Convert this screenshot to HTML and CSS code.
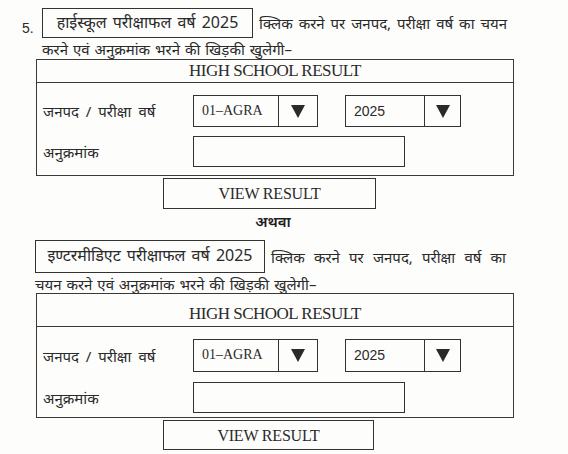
FILE: index.html
```html
<!DOCTYPE html>
<html lang="hi">

<head>
    <meta charset="utf-8">
    <meta name="viewport" content="width=device-width, initial-scale=1.0">
    <link rel="stylesheet" href="styles.css">
</head>

<body>
    <div class="sheet">

        <!-- step 5: high school result -->
        <div class="step step-hs">
            <div class="intro-line">
                <span class="step-no">5.</span>
                <span class="link-box">हाईस्कूल परीक्षाफल वर्ष 2025</span>
                <span class="intro-rest">क्लिक करने पर जनपद, परीक्षा वर्ष का चयन</span>
            </div>
            <div class="intro-next">करने एवं अनुक्रमांक भरने की खिड़की खुलेगी–</div>

            <div class="result-form">
                <div class="form-title">HIGH SCHOOL RESULT</div>
                <div class="form-row row-select">
                    <label class="wide-label">जनपद / परीक्षा वर्ष</label>
                    <div class="fake-select sel-district">
                        <span class="sel-value">01–AGRA</span>
                        <span class="sel-arrow"><svg width="14" height="13" viewBox="0 0 14 13"><path d="M0 0H14L7 13Z" fill="#2a2a2a"/></svg></span>
                    </div>
                    <div class="fake-select sel-year">
                        <span class="sel-value year">2025</span>
                        <span class="sel-arrow"><svg width="14" height="13" viewBox="0 0 14 13"><path d="M0 0H14L7 13Z" fill="#2a2a2a"/></svg></span>
                    </div>
                </div>
                <div class="form-row row-roll">
                    <label>अनुक्रमांक</label>
                    <div class="roll-input"></div>
                </div>
            </div>
            <div class="view-btn">VIEW RESULT</div>
        </div>

        <div class="or-line">अथवा</div>

        <!-- intermediate result -->
        <div class="step step-inter">
            <div class="intro-line">
                <span class="link-box">इण्टरमीडिएट परीक्षाफल वर्ष 2025</span>
                <span class="intro-rest">क्लिक करने पर जनपद, परीक्षा वर्ष का</span>
            </div>
            <div class="intro-next">चयन करने एवं अनुक्रमांक भरने की खिड़की खुलेगी–</div>

            <div class="result-form">
                <div class="form-title">HIGH SCHOOL RESULT</div>
                <div class="form-row row-select">
                    <label class="wide-label">जनपद / परीक्षा वर्ष</label>
                    <div class="fake-select sel-district">
                        <span class="sel-value">01–AGRA</span>
                        <span class="sel-arrow"><svg width="14" height="13" viewBox="0 0 14 13"><path d="M0 0H14L7 13Z" fill="#2a2a2a"/></svg></span>
                    </div>
                    <div class="fake-select sel-year">
                        <span class="sel-value year">2025</span>
                        <span class="sel-arrow"><svg width="14" height="13" viewBox="0 0 14 13"><path d="M0 0H14L7 13Z" fill="#2a2a2a"/></svg></span>
                    </div>
                </div>
                <div class="form-row row-roll">
                    <label>अनुक्रमांक</label>
                    <div class="roll-input"></div>
                </div>
            </div>
            <div class="view-btn">VIEW RESULT</div>
        </div>

    </div>
</body>

</html>
```

FILE: styles.css
```css
body {
    margin: 0;
    background: #fdfdfc;
    color: #2a2a2a;
    font-family: "Noto Sans", "Lohit Devanagari", "FreeSans", sans-serif;
    font-size: 15px;
}

.sheet {
    width: 568px;
    height: 454px;
    overflow: hidden;
    box-sizing: border-box;
    padding-top: 8px;
    border-right: 1px solid transparent;
}

.intro-line {
    display: flex;
    align-items: flex-start;
    word-spacing: 2px;
}

.step-no {
    width: 42px;
    box-sizing: border-box;
    padding-left: 22px;
    padding-top: 13px;
    font-family: "Liberation Sans", sans-serif;
    font-size: 14px;
    line-height: 14px;
    word-spacing: 0;
}

.link-box {
    border: 1px solid #333;
    box-sizing: border-box;
    height: 30px;
    line-height: 26px;
    text-align: center;
    font-size: 16px;
}

.step-hs .link-box {
    width: 211px;
}

.intro-rest {
    flex: 1;
    text-align: justify;
    text-align-last: justify;
    line-height: 18px;
    padding-top: 6px;
    margin-left: 6px;
    margin-right: 60px;
}

.intro-next {
    margin-left: 42px;
    line-height: 18px;
    margin-top: 2px;
    word-spacing: 1px;
}

.result-form {
    margin-top: 1px;
    margin-left: 36px;
    width: 478px;
    box-sizing: border-box;
    border: 1px solid #3a3a3a;
}

.form-title {
    height: 22px;
    border-bottom: 1px solid #3a3a3a;
    text-align: center;
    font-family: "Liberation Serif", serif;
    font-size: 17px;
    letter-spacing: -0.5px;
    line-height: 22px;
}

.form-row {
    display: flex;
    align-items: center;
    padding-left: 6px;
}

.form-row label {
    width: 150px;
    font-size: 15px;
}

.form-row .wide-label {
    word-spacing: 3px;
}

.row-select {
    margin-top: 12px;
}

.row-roll {
    margin-top: 9px;
    margin-bottom: 8px;
}

.fake-select {
    display: flex;
    height: 32px;
    box-sizing: border-box;
    border: 1px solid #333;
}

.sel-district {
    width: 125px;
}

.sel-year {
    width: 116px;
    margin-left: 27px;
}

.sel-value {
    flex: 1;
    padding-left: 8px;
    line-height: 30px;
    font-family: "Liberation Serif", serif;
    font-size: 14px;
}

.sel-value.year {
    font-family: "Liberation Sans", sans-serif;
    font-size: 14px;
}

.sel-arrow {
    width: 38px;
    border-left: 1px solid #333;
    display: flex;
    align-items: center;
    justify-content: center;
}

.sel-year .sel-arrow {
    width: 35px;
}

.roll-input {
    width: 212px;
    height: 31px;
    box-sizing: border-box;
    border: 1px solid #333;
}

.view-btn {
    margin-top: 2px;
    margin-left: 163px;
    width: 213px;
    height: 31px;
    box-sizing: border-box;
    border: 1px solid #333;
    text-align: center;
    font-family: "Liberation Serif", serif;
    font-size: 16px;
    letter-spacing: -0.2px;
    line-height: 29px;
}

.or-line {
    text-align: center;
    width: 546px;
    line-height: 18px;
    margin-top: 3px;
    font-size: 15px;
    font-weight: 600;
    color: #1e1e1e;
}

/* second block sits a bit lower and is drawn larger */
.step-inter {
    margin-top: 10px;
}

.step-inter .link-box {
    margin-left: 35px;
    width: 230px;
    height: 33px;
    line-height: 29px;
}

.step-inter .intro-rest {
    padding-top: 8px;
    margin-right: 61px;
}

.step-inter .intro-next {
    margin-left: 35px;
    margin-top: 2px;
}

.step-inter .result-form {
    margin-top: 0;
}

.step-inter .form-title {
    height: 32px;
    line-height: 40px;
}

.step-inter .row-select {
    margin-top: 12px;
}

.step-inter .fake-select {
    height: 33px;
}

.step-inter .row-roll {
    margin-top: 10px;
    margin-bottom: 4px;
}

.step-inter .view-btn {
    width: 211px;
    height: 30px;
}
```
